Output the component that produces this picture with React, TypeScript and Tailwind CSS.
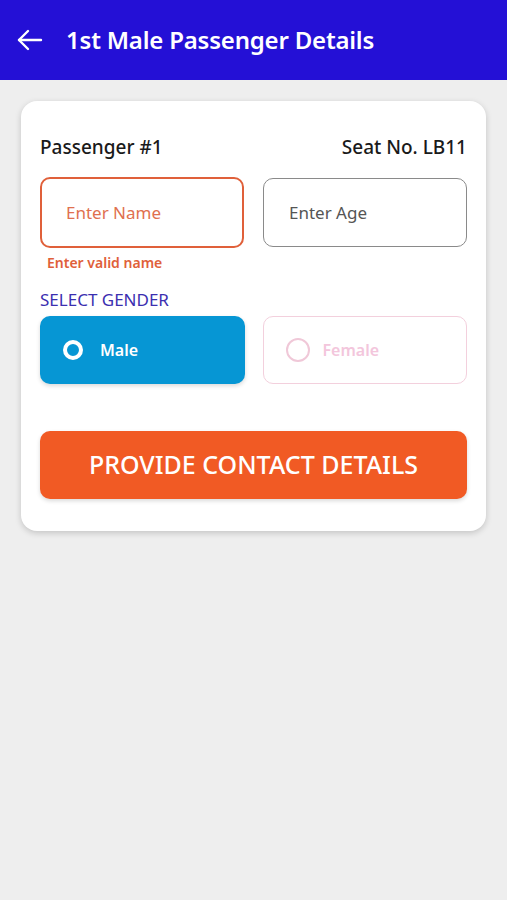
import React from "react";

const App = () => {
  return (
    <div
      className="min-h-[900px] w-full bg-[#eeeeee]"
      style={{ fontFamily: '"Noto Sans", "Open Sans", sans-serif' }}
    >
      <header className="flex h-[80px] items-center bg-[#2410d6] px-[16px] text-white">
        <svg width="27" height="24" viewBox="0 0 27 24" fill="none" stroke="white" strokeWidth="2.4" strokeLinecap="round" strokeLinejoin="round">
          <path d="M25 12H3" />
          <path d="M12 3L3 12l9 9" />
        </svg>
        <h1 className="ml-[23px] text-[24px] font-semibold tracking-[-0.2px]">1st Male Passenger Details</h1>
      </header>

      <div className="px-[21px] pt-[21px]">
        <div className="rounded-[16px] bg-white px-[19px] pb-[32px] pt-[34px] shadow-[0_2px_6px_rgba(0,0,0,0.18)]">
          <div className="flex items-center justify-between text-[19px] font-medium leading-[24px] text-[#1a1a1a]">
            <span>Passenger #1</span>
            <span>Seat No. LB11</span>
          </div>

          <div className="mt-[18px] grid grid-cols-2 gap-[19px]">
            <div>
              <div className="flex h-[71px] items-center rounded-[10px] border-2 border-[#e0603a] px-[24px] text-[17px] text-[#e0704f]">
                Enter Name
              </div>
              <p className="ml-[7px] mt-[6px] text-[14px] font-semibold leading-[18px] text-[#e0603a]">Enter valid name</p>
            </div>
            <div className="mt-[1px] flex h-[69px] items-center rounded-[10px] border border-[#8a8a8a] px-[25px] text-[17px] text-[#555555]">
              Enter Age
            </div>
          </div>

          <p className="mt-[17px] text-[17px] leading-[22px] text-[#3b2fb0]">SELECT GENDER</p>

          <div className="mt-[5px] grid grid-cols-2 gap-[18px]">
            <div className="flex h-[68px] items-center rounded-[10px] bg-[#0696d4] px-[23px] shadow-[0_2px_4px_rgba(0,0,0,0.15)]">
              <span className="h-[20px] w-[20px] rounded-full border-[4px] border-white" />
              <span className="ml-[17px] text-[16px] font-semibold text-white">Male</span>
            </div>
            <div className="flex h-[68px] items-center rounded-[10px] border border-[#f3d0dd] px-[22px]">
              <span className="h-[24px] w-[24px] rounded-full border-2 border-[#f0c8d8]" />
              <span className="ml-[13px] text-[16px] font-semibold text-[#f3c6dc]">Female</span>
            </div>
          </div>

          <button className="mt-[47px] flex h-[68px] w-full items-center justify-center rounded-[10px] bg-[#f15a24] text-[25px] font-medium text-white shadow-[0_2px_4px_rgba(0,0,0,0.15)]">
            PROVIDE CONTACT DETAILS
          </button>
        </div>
      </div>
    </div>
  );
};

export default App;
